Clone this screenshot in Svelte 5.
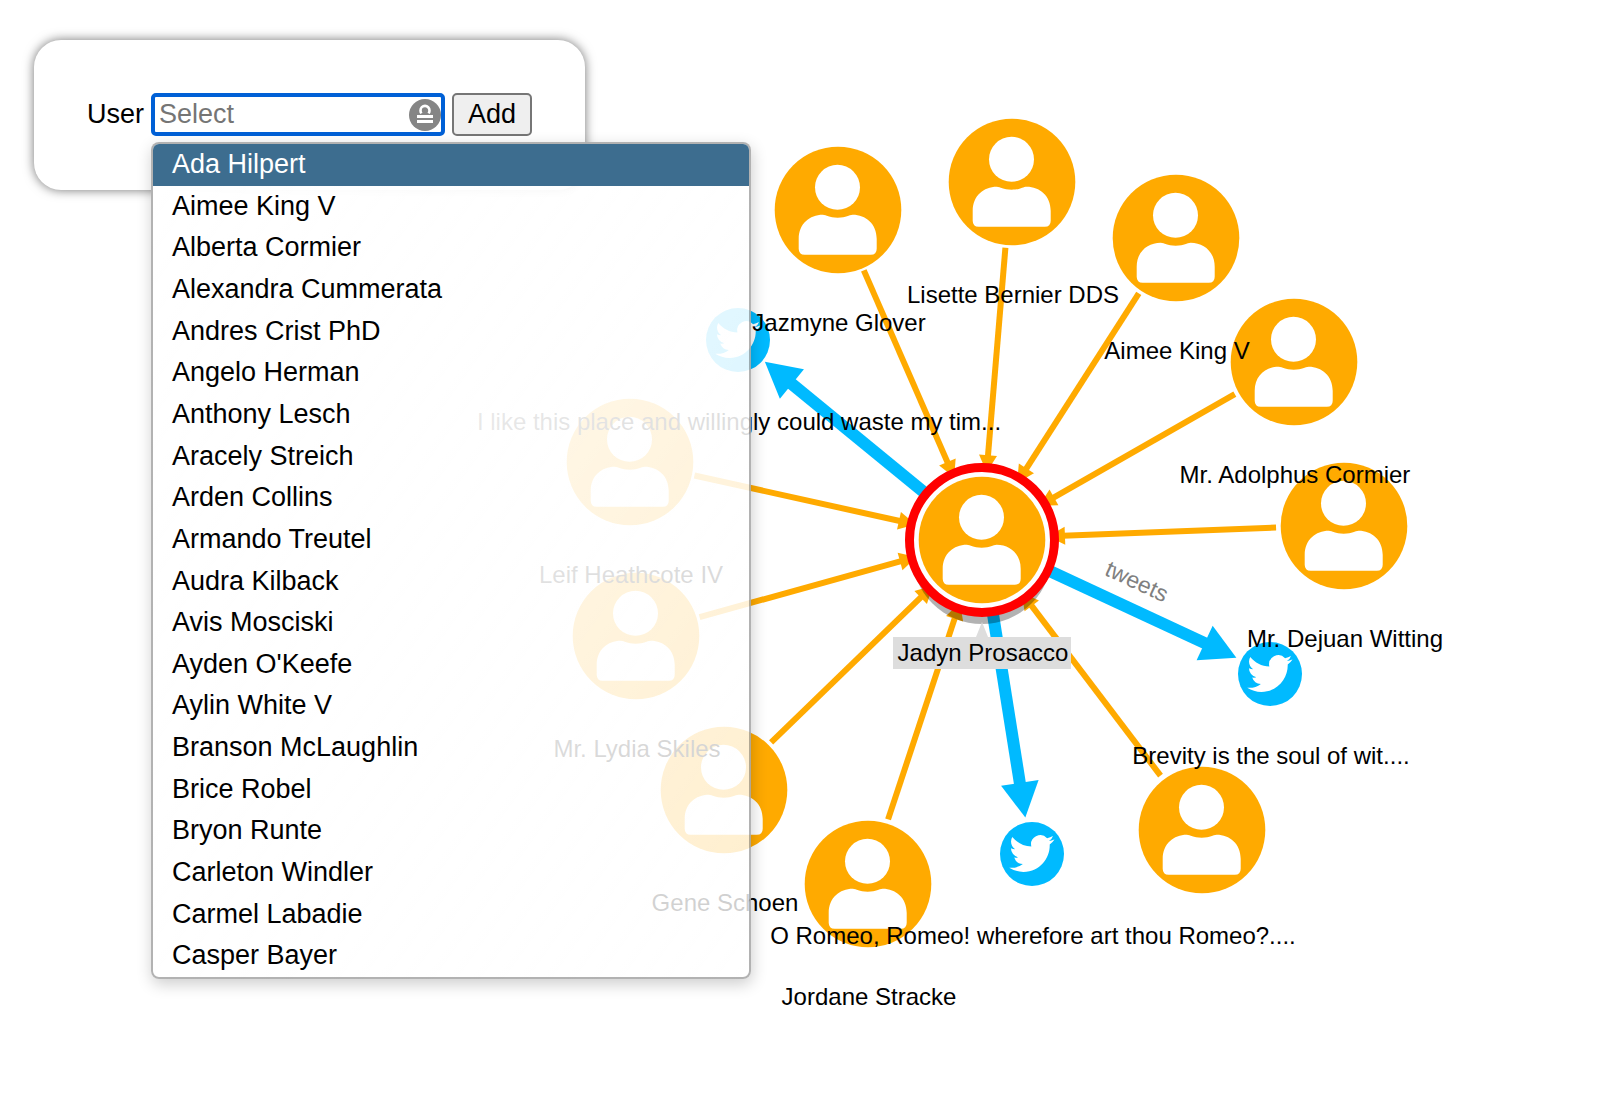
<script>
  const BIRD =
    'M23.953 4.57a10 10 0 01-2.825.775 4.958 4.958 0 002.163-2.723c-.951.555-2.005.959-3.127 1.184a4.92 4.92 0 00-8.384 4.482C7.69 8.095 4.067 6.13 1.64 3.162a4.822 4.822 0 00-.666 2.475c0 1.71.87 3.213 2.188 4.096a4.904 4.904 0 01-2.228-.616v.06a4.923 4.923 0 003.946 4.827 4.996 4.996 0 01-2.212.085 4.936 4.936 0 004.604 3.417 9.867 9.867 0 01-6.102 2.105c-.39 0-.779-.023-1.17-.067a13.995 13.995 0 007.557 2.209c9.053 0 13.998-7.496 13.998-13.985 0-.21 0-.42-.015-.63A9.935 9.935 0 0024 4.59z';
  const BODY =
    'M-39 29C-39 14-28 5-15 5C-11 5-9 8 0 8S11 5 15 5C28 5 39 14 39 29V39Q39 45 33 45H-33Q-39 45-39 39Z';

  const names = [
    'Ada Hilpert', 'Aimee King V', 'Alberta Cormier', 'Alexandra Cummerata',
    'Andres Crist PhD', 'Angelo Herman', 'Anthony Lesch', 'Aracely Streich',
    'Arden Collins', 'Armando Treutel', 'Audra Kilback', 'Avis Mosciski',
    "Ayden O'Keefe", 'Aylin White V', 'Branson McLaughlin', 'Brice Robel',
    'Bryon Runte', 'Carleton Windler', 'Carmel Labadie', 'Casper Bayer'
  ];

  const hub = { x: 982, y: 540, label: 'Jadyn Prosacco' };

  const users = [
    { x: 838, y: 210, label: 'Jazmyne Glover' },
    { x: 1012, y: 182, label: 'Lisette Bernier DDS' },
    { x: 1176, y: 238, label: 'Aimee King V' },
    { x: 1294, y: 362, label: 'Mr. Adolphus Cormier' },
    { x: 1344, y: 526, label: 'Mr. Dejuan Witting' },
    { x: 1202, y: 830, label: '' },
    { x: 868, y: 884, label: 'Jordane Stracke' },
    { x: 724, y: 790, label: 'Gene Schoen' },
    { x: 636, y: 636, label: 'Mr. Lydia Skiles' },
    { x: 630, y: 462, label: 'Leif Heathcote IV' }
  ];

  const tweets = [
    { x: 738, y: 340, label: 'I like this place and willingly could waste my tim...' },
    { x: 1270, y: 674, label: 'Brevity is the soul of wit....' },
    { x: 1032, y: 854, label: 'O Romeo, Romeo! wherefore art thou Romeo?....' }
  ];

  // Line and arrowhead from a to b, leaving a gap around each node.
  function edge(a, b, startGap, endGap, headLength, headWidth) {
    const d = Math.hypot(b.x - a.x, b.y - a.y);
    const ux = (b.x - a.x) / d;
    const uy = (b.y - a.y) / d;
    const tip = { x: b.x - ux * endGap, y: b.y - uy * endGap };
    const base = { x: tip.x - ux * headLength, y: tip.y - uy * headLength };
    const h = headWidth / 2;
    return {
      x1: a.x + ux * startGap,
      y1: a.y + uy * startGap,
      x2: base.x + ux * 2,
      y2: base.y + uy * 2,
      head: `${tip.x},${tip.y} ${base.x - uy * h},${base.y + ux * h} ${base.x + uy * h},${base.y - ux * h}`
    };
  }

  const follows = users.map((u) => edge(u, hub, 67, 67, 17, 18));
  const posts = tweets.map((t) => edge(hub, t, 68, 36, 35, 38));

  let query = $state('');
  let selected = $state(0);
</script>

{#snippet person(n)}
  <g transform="translate({n.x} {n.y})">
    <circle class="user" r="63.3" />
    <circle class="mark" cx="-0.5" cy="-22.7" r="22.5" />
    <path class="mark" transform="translate(-0.3 -0.3)" d={BODY} />
  </g>
{/snippet}

<main>
  <svg class="graph" role="img" aria-label="User graph">
    <g transform="translate(-1 -1)">
      {#each posts as e}
        <line class="post" x1={e.x1} y1={e.y1} x2={e.x2} y2={e.y2} />
        <polygon class="tweet" points={e.head} />
      {/each}
      {#each follows as e}
        <line class="follow" x1={e.x1} y1={e.y1} x2={e.x2} y2={e.y2} />
        <polygon class="user" points={e.head} />
      {/each}
    </g>
    <text class="edge-label" transform="translate(1126 607) rotate(25)" x="-1" y="-20">tweets</text>

    {#each users as u}
      {@render person(u)}
    {/each}
    {#each tweets as t}
      <g transform="translate({t.x} {t.y})">
        <circle class="tweet" r="32" />
        <path class="mark" transform="translate(-22.8 -23) scale(1.88)" d={BIRD} />
      </g>
    {/each}

    <circle class="shade" cx={hub.x} cy={hub.y + 14} r="70" />
    <circle class="halo" cx={hub.x} cy={hub.y} r="72.5" />
    {@render person(hub)}
    <path class="tag" d="M982 622L988 637H1071V669H893V637H976Z" />

    {#each users as u}
      <text x={u.x + 1} y={u.y + 121}>{u.label}</text>
    {/each}
    {#each tweets as t}
      <text x={t.x + 1} y={t.y + 90}>{t.label}</text>
    {/each}
    <text x={hub.x + 1} y={hub.y + 121}>{hub.label}</text>
  </svg>

  <form class="panel" onsubmit={(e) => e.preventDefault()}>
    <label for="user">User</label>
    <div class="combo">
      <input id="user" type="text" placeholder="Select" autocomplete="off" bind:value={query} />
      <svg class="lock" viewBox="0 0 32 32" aria-hidden="true">
        <circle cx="16" cy="16" r="16" fill="#858585" />
        <path d="M12.4 14.4Q11.5 13 11.5 11.4a4.5 4.5 0 0 1 9 0Q20.5 13 19.6 14.4" fill="none" stroke="#fff" stroke-width="2.6" />
        <path d="M8 16h16v3H8zM8 21h16v3H8z" fill="#fff" />
      </svg>
      <ul role="listbox" aria-label="Users">
        {#each names as name, i}
          <li role="option" aria-selected={i === selected}>{name}</li>
        {/each}
      </ul>
    </div>
    <button type="submit">Add</button>
  </form>
</main>

<style>
  :global(body) {
    margin: 0;
    background: #fff;
  }

  main {
    position: relative;
    box-sizing: border-box;
    min-height: 100vh;
    padding: 40px 34px;
    overflow: hidden;
    font-family: 'Liberation Sans', Arial, sans-serif;
    font-size: 27px;
    color: #000;
  }

  .graph {
    position: absolute;
    inset: 0;
    width: 100%;
    height: 100%;
    overflow: visible;
  }

  .graph text {
    font-size: 24px;
    text-anchor: middle;
  }

  .graph .edge-label {
    font-size: 23px;
    fill: #808080;
  }

  .user {
    fill: #fa0;
  }

  .tweet {
    fill: #00baff;
  }

  .mark {
    fill: #fff;
  }

  .follow {
    stroke: #fa0;
    stroke-width: 6;
  }

  .post {
    stroke: #00baff;
    stroke-width: 12;
  }

  .shade {
    fill: rgba(0, 0, 0, 0.3);
  }

  .halo {
    fill: #fff;
    stroke: #f00;
    stroke-width: 9;
  }

  .tag {
    fill: #ddd;
  }

  .panel {
    position: relative;
    display: inline-flex;
    align-items: center;
    gap: 7px;
    padding: 53px 53px 54px;
    background: #fff;
    border-radius: 27px;
    box-shadow: 0 0 11px rgba(0, 0, 0, 0.55);
  }

  .combo {
    position: relative;
  }

  input {
    display: block;
    box-sizing: border-box;
    width: 294px;
    height: 43px;
    padding: 0 36px 0 4px;
    font: inherit;
    background: #fff;
    border: 4px solid #0060d6;
    border-radius: 5px;
    outline: none;
  }

  input::placeholder {
    color: #757575;
    opacity: 1;
  }

  .lock {
    position: absolute;
    top: 6px;
    right: 4px;
    width: 32px;
    height: 32px;
  }

  button {
    box-sizing: border-box;
    width: 80px;
    height: 43px;
    padding: 0;
    font: inherit;
    color: #000;
    background: #efefef;
    border: 2px solid #767676;
    border-radius: 5px;
  }

  ul {
    position: absolute;
    top: calc(100% + 6px);
    left: 0;
    z-index: 1;
    box-sizing: border-box;
    display: grid;
    grid-auto-rows: 1fr;
    width: 600px;
    height: 837px;
    margin: 0;
    padding: 0;
    overflow: hidden;
    list-style: none;
    background: linear-gradient(to bottom right, #fff, rgba(255, 255, 255, 0.8)) border-box;
    border: 2px solid rgba(0, 0, 0, 0.3);
    border-radius: 8px;
    box-shadow: 1px 5px 16px rgba(0, 0, 0, 0.2);
  }

  li {
    padding: 0 19px;
    line-height: 40px;
  }

  li[aria-selected='true'] {
    color: #fff;
    background: #3d6d8f;
  }
</style>
